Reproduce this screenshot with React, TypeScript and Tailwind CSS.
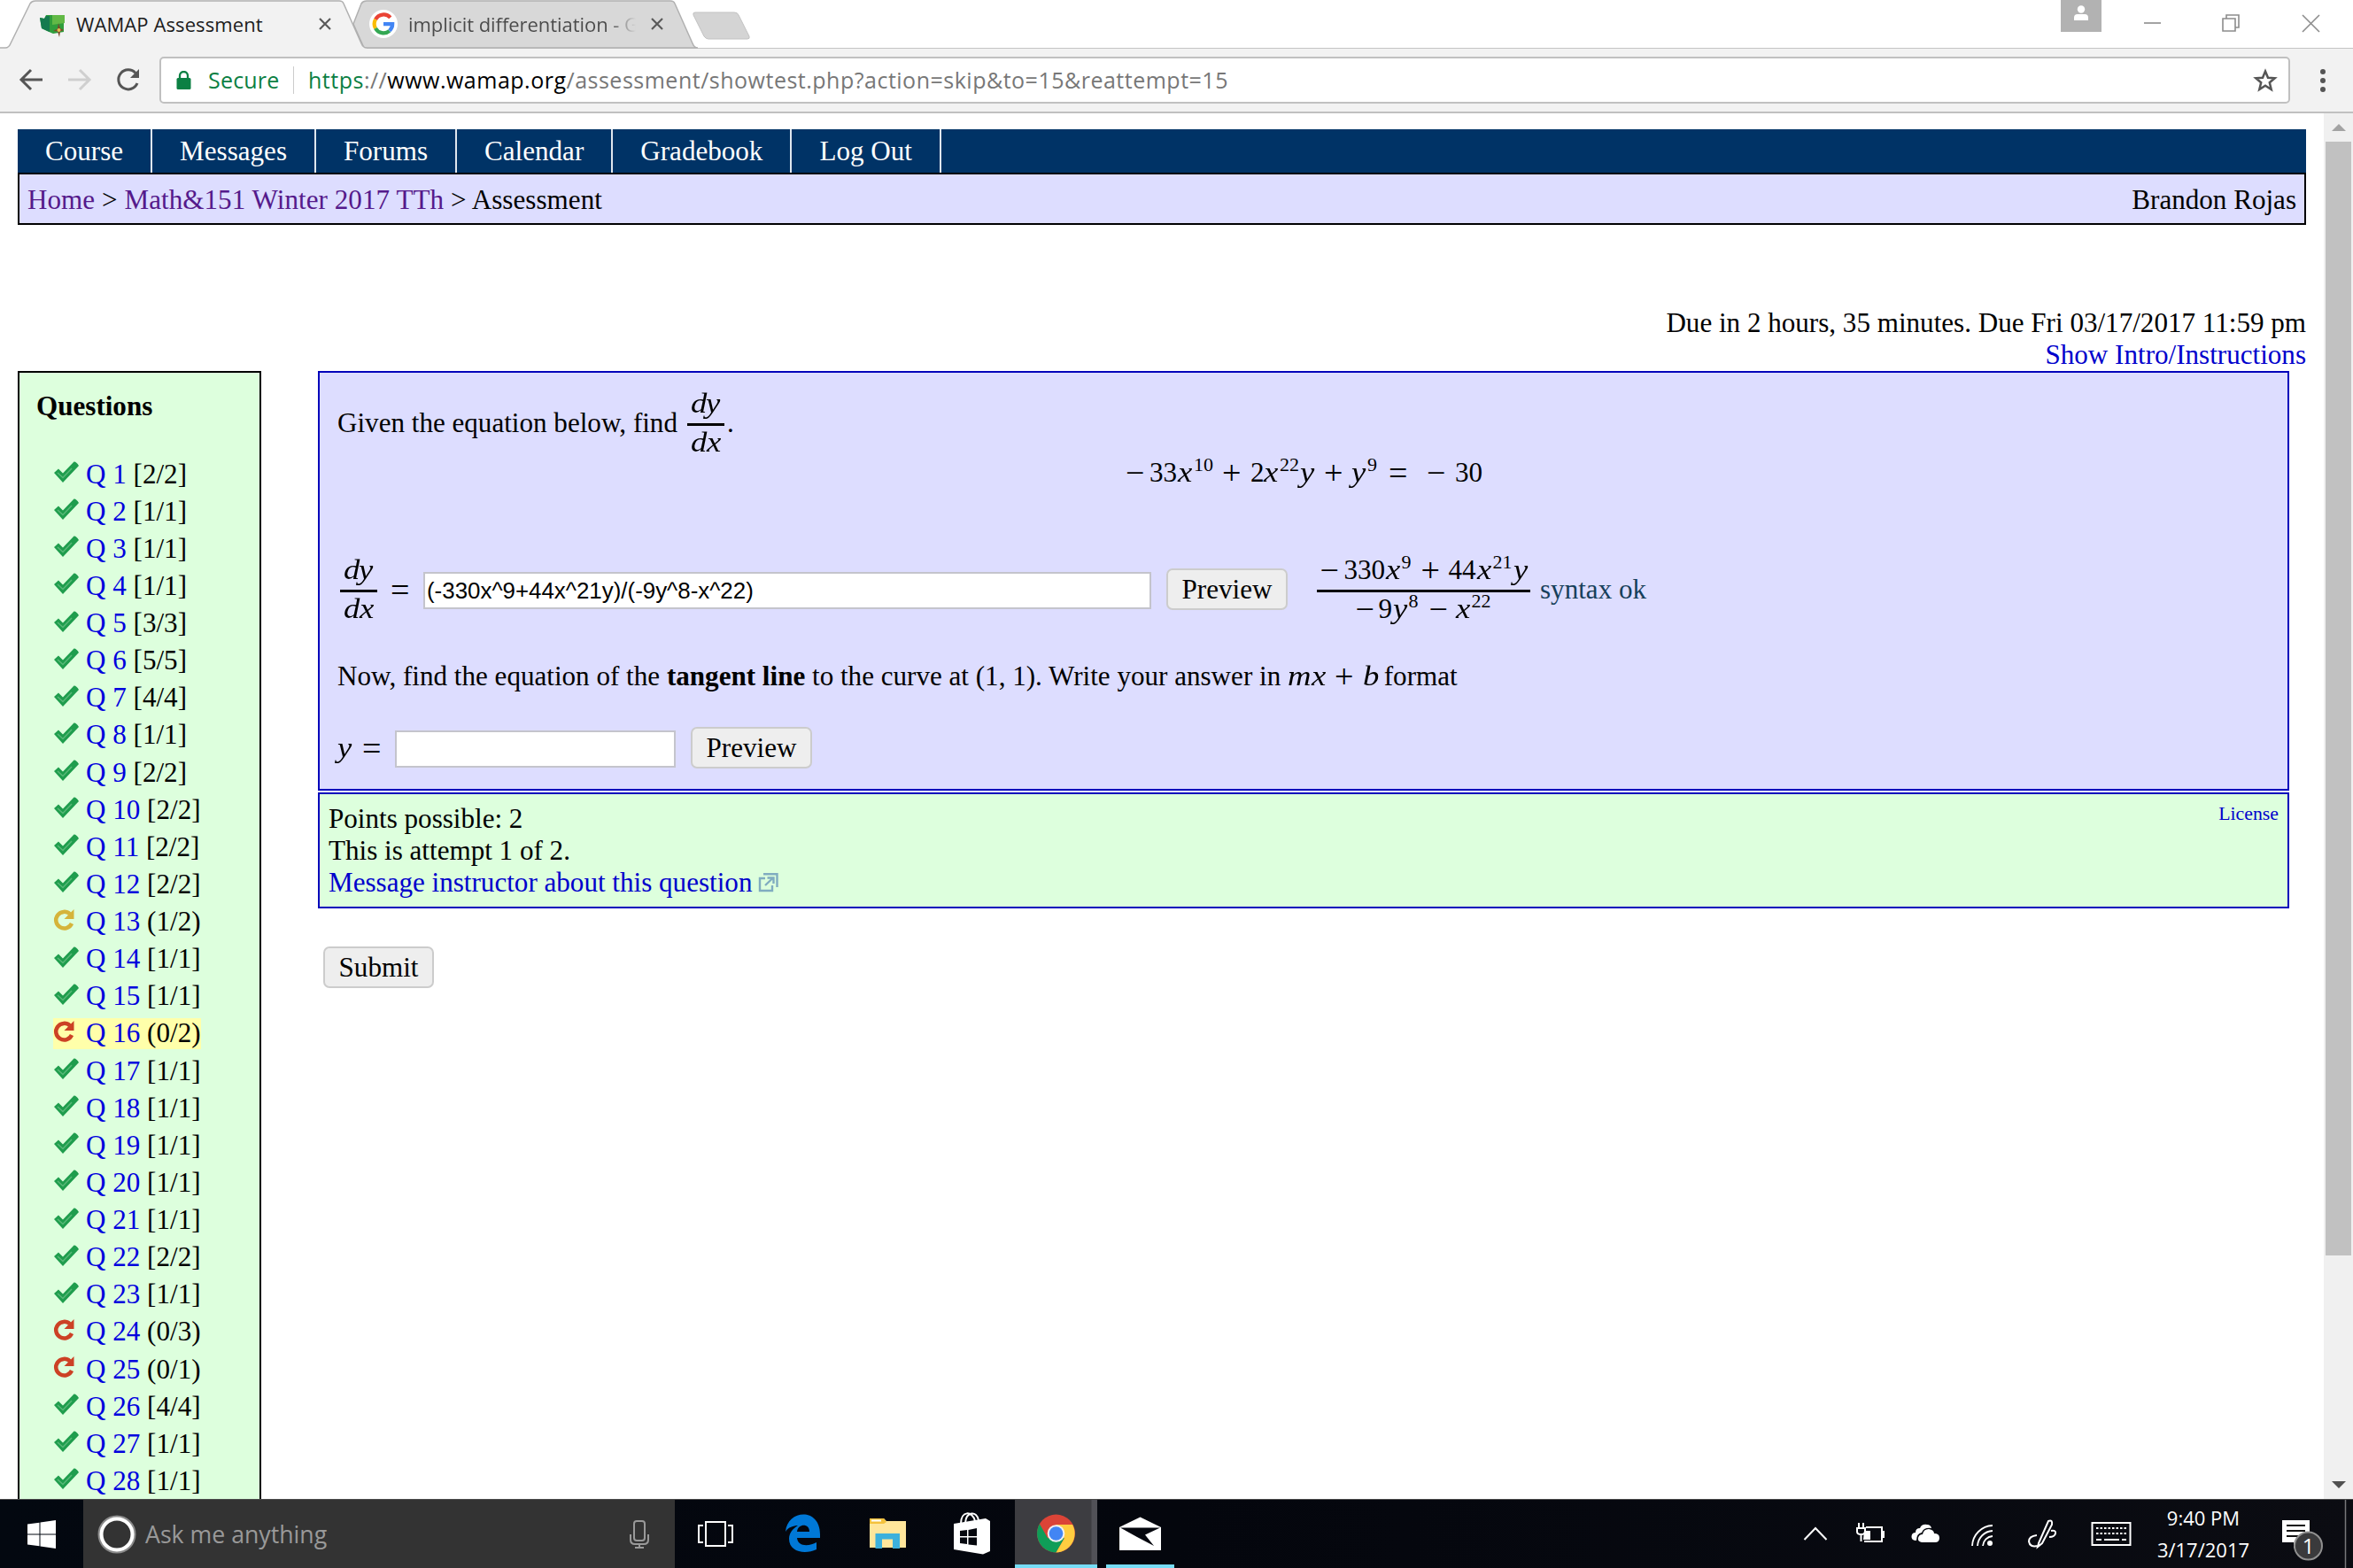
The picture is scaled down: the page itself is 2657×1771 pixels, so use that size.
import type { ReactNode } from "react";

type Status = "full" | "partial" | "wrong";

const questions: { score: string; status: Status }[] = [
  { score: "[2/2]", status: "full" },
  { score: "[1/1]", status: "full" },
  { score: "[1/1]", status: "full" },
  { score: "[1/1]", status: "full" },
  { score: "[3/3]", status: "full" },
  { score: "[5/5]", status: "full" },
  { score: "[4/4]", status: "full" },
  { score: "[1/1]", status: "full" },
  { score: "[2/2]", status: "full" },
  { score: "[2/2]", status: "full" },
  { score: "[2/2]", status: "full" },
  { score: "[2/2]", status: "full" },
  { score: "(1/2)", status: "partial" },
  { score: "[1/1]", status: "full" },
  { score: "[1/1]", status: "full" },
  { score: "(0/2)", status: "wrong" },
  { score: "[1/1]", status: "full" },
  { score: "[1/1]", status: "full" },
  { score: "[1/1]", status: "full" },
  { score: "[1/1]", status: "full" },
  { score: "[1/1]", status: "full" },
  { score: "[2/2]", status: "full" },
  { score: "[1/1]", status: "full" },
  { score: "(0/3)", status: "wrong" },
  { score: "(0/1)", status: "wrong" },
  { score: "[4/4]", status: "full" },
  { score: "[1/1]", status: "full" },
  { score: "[1/1]", status: "full" },
];

const CURRENT = 16;

/* ---------- browser chrome ---------- */

const TabClose = () => (
  <svg width="14" height="14" viewBox="0 0 14 14" className="shrink-0">
    <path d="M1 1l12 12M13 1L1 13" stroke="#5a5a5a" strokeWidth="2.2" />
  </svg>
);

const TabStrip = () => (
  <div className="relative flex h-[54px] shrink-0 bg-white font-['Open_Sans',sans-serif] text-[22px] leading-[54px]">
    <svg width="860" height="55" viewBox="0 0 860 55" className="absolute top-0 left-0">
      <path d="M399 27L408 4Q410 1 414 1H757Q761 1 762 4L782 49Q784 54 788 54H411z" fill="#d8d8d8" stroke="#b0b0b0" strokeWidth="1.5" />
      <path d="M785 14H829Q833 14 834 17L846 41Q847 44 844 44H800Q797 44 795 41L783 17Q782 14 785 14z" fill="#d4d4d4" stroke="#c2c2c2" />
      <path d="M0 55V54H6Q10 54 12 49L34 4Q36 1 40 1H383Q387 1 388 4L408 49Q410 54 414 54V55z" fill="#f2f2f2" />
      <path d="M0 54H6Q10 54 12 49L34 4Q36 1 40 1H383Q387 1 388 4L408 49Q410 54 414 54" fill="none" stroke="#b0b0b0" strokeWidth="1.5" />
    </svg>
    <div className="relative flex w-[400px] items-center pl-[44px]">
      <svg width="31" height="26" viewBox="0 0 31 26" className="mt-[4px] shrink-0">
        <path d="M1 4L6 5 8 1 28 1V20L16 22 9 19 3 16z" fill="#2f9e3c" />
        <path d="M1 4L6 5 8 2 12 2 12 20 3 16z" fill="#157a4f" />
        <path d="M15 1H29V10L15 12z" fill="#62b946" />
        <path d="M22 10L24 16 28 18 24 19.500 23 26 21 19.500 16 19 21 16.500z" fill="#7b4a2a" />
        <circle cx="22.500" cy="18" r="2" fill="#e0c050" />
      </svg>
      <span className="ml-[11px] w-[274px] whitespace-nowrap text-[#1c1c1c] tracking-[0.1px]">WAMAP Assessment</span>
      <TabClose />
    </div>
    <div className="relative flex items-center pl-[17px]">
      <svg width="32" height="32" viewBox="0 0 32 32" className="shrink-0">
        <circle cx="16" cy="16" r="16" fill="#fff" />
        <g fill="none" strokeWidth="4.200">
          <path d="M23.800 8.900A10.300 10.300 0 0 0 7 11" stroke="#ea4335" />
          <path d="M7 11A10.300 10.300 0 0 0 7 21" stroke="#fbbc05" />
          <path d="M7 21A10.300 10.300 0 0 0 22.800 23.800" stroke="#34a853" />
          <path d="M22.800 23.800A10.300 10.300 0 0 0 26.200 16.100H16" stroke="#4285f4" />
        </g>
      </svg>
      <span className="ml-[12px] w-[257px] bg-gradient-to-r from-[#4a4a4a] from-88% to-[#d8d8d8] bg-clip-text whitespace-nowrap text-transparent tracking-[-0.050px]">
        implicit differentiation - G
      </span>
      <span className="ml-[17px] flex"><TabClose /></span>
    </div>
    <div className="relative ml-auto flex">
      <div className="flex h-[36px] w-[46px] justify-center bg-[#b2b2b2]">
        <svg width="20" height="24" viewBox="0 0 20 24">
          <circle cx="10" cy="10.500" r="4.200" fill="#fff" />
          <path d="M2 23V20Q2 16 6 16H14Q18 16 18 20V23z" fill="#fff" />
        </svg>
      </div>
      <svg width="284" height="54" viewBox="0 0 284 54" fill="none" stroke="#8c8c8c" strokeWidth="1.600">
        <path d="M48 26H67" />
        <path d="M137 21H151V35H137zM141 21V17H155V31H151" />
        <path d="M227 17L246 36M246 17L227 36" />
      </svg>
    </div>
  </div>
);

const Toolbar = () => (
  <div className="flex h-[74px] shrink-0 items-center border-t border-b-2 border-t-[#c4c4c4] border-b-[#c0c0c0] bg-[#f2f2f2] font-['Open_Sans',sans-serif] text-[25px]">
    <svg width="180" height="52" viewBox="0 0 180 52" fill="none" strokeWidth="3" className="shrink-0">
      <path d="M48 25H25M35 14L24 25L35 36" stroke="#555" />
      <path d="M77 25H100M90 14L101 25L90 36" stroke="#cfcfcf" />
      <path d="M153 17.500A11 11 0 1 0 155 29" stroke="#555" />
      <path d="M157 13V23H147z" fill="#555" />
    </svg>
    <div className="flex h-[53px] w-[2406px] items-center rounded-[5px] border-2 border-[#c0c0c0] bg-white pl-[17px]">
      <svg width="17" height="22" viewBox="0 0 17 22">
        <rect x="0.500" y="8" width="16" height="13" rx="1.500" fill="#0b8043" />
        <path d="M4 9V5.500A4.500 4.500 0 0 1 13 5.500V9" fill="none" stroke="#0b8043" strokeWidth="2.300" />
      </svg>
      <span className="ml-[19px] w-[96px] tracking-[0.200px] text-[#0b8043]">Secure</span>
      <span className="h-[31px] w-px bg-[#ccc]" />
      <span className="ml-[16px] whitespace-nowrap text-[#777] tracking-[0.500px]">
        <span className="text-[#0b8043]">https</span>://<span className="text-black">www.wamap.org</span>
        /assessment/showtest.php?action=skip&amp;to=15&amp;reattempt=15
      </span>
      <svg width="28" height="27" viewBox="0 0 28 27" className="mr-[12px] ml-auto">
        <path d="M14 3.500L17 10.700L24.700 11.300L18.800 16.300L20.700 24L14 19.800L7.300 24L9.200 16.300L3.300 11.300L11 10.700z" fill="none" stroke="#555" strokeWidth="2.500" />
      </svg>
    </div>
    <svg width="8" height="30" viewBox="0 0 8 30" className="ml-[33px]">
      <circle cx="4" cy="5" r="3" fill="#555" />
      <circle cx="4" cy="15" r="3" fill="#555" />
      <circle cx="4" cy="25" r="3" fill="#555" />
    </svg>
  </div>
);

const Scrollbar = () => (
  <div className="flex w-[33px] shrink-0 flex-col items-center bg-[#f0f0f0]">
    <svg width="16" height="32" viewBox="0 0 16 32"><path d="M0 20L8 12L16 20z" fill="#a3a3a3" /></svg>
    <div className="h-[1258px] w-[29px] bg-[#c1c1c1]" />
    <svg width="16" height="8" viewBox="0 0 16 8" className="mt-auto mb-[12px]"><path d="M0 0H16L8 8z" fill="#505050" /></svg>
  </div>
);

/* ---------- WAMAP page ---------- */

const NavItem = ({ children }: { children: ReactNode }) => (
  <a className="border-r-2 border-[#dfe6ee] px-[31px] text-white">{children}</a>
);

const StatusIcon = ({ status }: { status: Status }) => {
  if (status === "full") {
    return (
      <svg width="30" height="26" viewBox="0 0 30 26">
        <path d="M1 14L6 9.500L11 14.500L23.500 1.500Q26 1 29 6L11 25Z" fill="#1f9d4d" />
        <path d="M5 14L11 19.500L21 9" fill="none" stroke="#58b877" strokeWidth="1.500" />
      </svg>
    );
  }
  const color = status === "partial" ? "#d5b43a" : "#cc4125";
  return (
    <svg width="30" height="26" viewBox="0 0 30 26">
      <path d="M19 6.500A9.300 9.300 0 1 0 21 17" fill="none" stroke={color} strokeWidth="4.500" />
      <path d="M23.500 1V12H12.500z" fill={color} />
    </svg>
  );
};

const Sidebar = () => (
  <div className="h-[1400px] w-[275px] shrink-0 border-2 border-black bg-[#ddffdd] pt-[20px] pl-[19px]">
    <h3 className="leading-[36px] font-bold">Questions</h3>
    <ul className="mt-[37.500px] ml-[19px]">
      {questions.map((q, i) => (
        <li key={i} className="flex h-[42.140px] items-center">
          <span className={i + 1 === CURRENT ? "flex h-[35px] items-center bg-[#ffffaa]" : "flex h-[35px] items-center"}>
            <span className="-mt-[5px]"><StatusIcon status={q.status} /></span>
            <span className="ml-[7px] whitespace-nowrap">
              <a className="text-[#0000dd]">Q {i + 1}</a> {q.score}
            </span>
          </span>
        </li>
      ))}
    </ul>
  </div>
);

/* Math pieces: every token has its own advance width, sized like MathJax output */
const Num = ({ w, children }: { w: string; children: ReactNode }) => (
  <span className={`inline-block text-left leading-[0] ${w}`}>{children}</span>
);
const Var = ({ w = "w-[18px]", children }: { w?: string; children: ReactNode }) => (
  <span className={`inline-block text-left leading-[0] ${w}`}>
    <i className="inline-block origin-left scale-x-[1.18]">{children}</i>
  </span>
);
const Op = ({ w, children }: { w: string; children: ReactNode }) => (
  <span className={`inline-block text-left align-[-3px] text-[38px] leading-[0] ${w}`}>{children}</span>
);
const Sup = ({ w, children }: { w: string; children: ReactNode }) => (
  <span className={`inline-block text-left align-[12px] text-[22px] leading-[0] ${w}`}>{children}</span>
);

const Frac = ({ w, top, bottom }: { w: string; top: ReactNode; bottom: ReactNode }) => (
  <span className={`flex shrink-0 flex-col text-center whitespace-nowrap ${w}`}>
    <span className="h-[36px] shrink-0 leading-[39px]">{top}</span>
    <span className="mt-[6px] h-[3px] shrink-0 bg-black" />
    <span className="h-[36px] shrink-0 leading-[38px]">{bottom}</span>
  </span>
);

const DyDx = () => (
  <Frac
    w="w-[42px]"
    top={<><Var w="w-[17px]">d</Var><Var w="w-[17px]">y</Var></>}
    bottom={<><Var w="w-[18px]">d</Var><Var w="w-[17px]">x</Var></>}
  />
);

const Btn = ({ className, children }: { className: string; children: ReactNode }) => (
  <button className={`h-[47px] shrink-0 rounded-[7px] border-2 border-[#ccc] bg-[#eee] leading-[36px] ${className}`}>{children}</button>
);

const QuestionPanel = () => (
  <div className="h-[474px] w-[2226px] border-2 border-[#0000bb] bg-[#ddddff] pt-[15px] pl-[20px]">
    <div className="flex h-[78px]">
      <span className="mt-[24px] w-[395px] whitespace-nowrap">Given the equation below, find</span>
      <DyDx />
      <span className="mt-[24px] ml-[3px]">.</span>
    </div>

    <div className="h-[36px] pl-[890px] leading-[39px] whitespace-nowrap">
      <Op w="w-[27px]">−</Op><Num w="w-[32px]">33</Num><Var>x</Var><Sup w="w-[32px]">10</Sup>
      <Op w="w-[32px]">+</Op><Num w="w-[15px]">2</Num><Var>x</Var><Sup w="w-[23px]">22</Sup><Var w="w-[27px]">y</Var>
      <Op w="w-[31px]">+</Op><Var>y</Var><Sup w="w-[24px]">9</Sup>
      <Op w="w-[43px]">=</Op><Op w="w-[32px]">−</Op><Num w="w-[31px]">30</Num>
    </div>

    <div className="mt-[74px] flex h-[80px]">
      <span className="ml-[3px] flex"><DyDx /></span>
      <span className="mt-[24px] ml-[15px] w-[37px]"><Op w="w-[22px]">=</Op></span>
      <input
        readOnly
        value="(-330x^9+44x^21y)/(-9y^8-x^22)"
        className="mt-[22px] h-[42px] w-[822px] border-2 border-[#c4c4cc] bg-white px-[2px] font-['Liberation_Sans',sans-serif] text-[25.900px]"
      />
      <Btn className="mt-[18px] ml-[17px] w-[137px]">Preview</Btn>
      <span className="ml-[33px] flex">
        <Frac
          w="w-[241px]"
          top={
            <>
              <Op w="w-[27px]">−</Op><Num w="w-[47px]">330</Num><Var>x</Var><Sup w="w-[22px]">9</Sup>
              <Op w="w-[31px]">+</Op><Num w="w-[32px]">44</Num><Var>x</Var><Sup w="w-[23px]">21</Sup><Var w="w-[16px]">y</Var>
            </>
          }
          bottom={
            <>
              <Op w="w-[26px]">−</Op><Num w="w-[16px]">9</Num><Var>y</Var><Sup w="w-[23px]">8</Sup>
              <Op w="w-[30px]">−</Op><Var>x</Var><Sup w="w-[23px]">22</Sup>
            </>
          }
        />
      </span>
      <span className="mt-[24px] ml-[11px] whitespace-nowrap text-[#17405a]">syntax ok</span>
    </div>

    <p className="mt-[42px] h-[36px] leading-[36px] whitespace-nowrap">
      Now, find the equation of the <b>tangent line</b> to the curve at (1, 1). Write your answer in{" "}
      <Var w="w-[27px]">m</Var><Var w="w-[26px]">x</Var><Op w="w-[32px]">+</Op><Var w="w-[16px]">b</Var> format
    </p>

    <div className="mt-[39px] flex h-[46px]">
      <span className="mt-[6px] w-[65px] whitespace-nowrap"><Var w="w-[28px]">y</Var><Op w="w-[22px]">=</Op></span>
      <input readOnly className="mt-[4px] h-[42px] w-[317px] border-2 border-[#c4c4cc] bg-white" />
      <Btn className="ml-[17px] w-[137px]">Preview</Btn>
    </div>
  </div>
);

const AttemptPanel = () => (
  <div className="mt-[2px] flex h-[131px] w-[2226px] justify-between border-2 border-[#0000bb] bg-[#ddffdd] pt-[10px] pr-[10px] pl-[10px]">
    <div>
      <p>Points possible: 2</p>
      <p>This is attempt 1 of 2.</p>
      <a className="flex text-[#0000cc]">
        Message instructor about this question
        <svg width="23" height="22" viewBox="0 0 23 22" fill="none" stroke="#80acc0" strokeWidth="2.400" className="mt-[7px] ml-[7px]">
          <path d="M8 6H2V20H16V14" />
          <path d="M6 1.200H21.500V16" />
          <path d="M8 14L17 5.500M10.500 5.500H17.500V12" />
        </svg>
      </a>
    </div>
    <a className="text-[21.800px] leading-[25px] text-[#0000cc]">License</a>
  </div>
);

const Page = () => (
  <div className="flex-1 overflow-hidden pt-[18px] pl-[20px] font-['Liberation_Serif',serif] text-[31.100px] leading-[36px] text-black">
    <div className="w-[2584px]">
      <nav className="flex h-[49px] bg-[#003366] leading-[50px]">
        <NavItem>Course</NavItem>
        <NavItem>Messages</NavItem>
        <NavItem>Forums</NavItem>
        <NavItem>Calendar</NavItem>
        <NavItem>Gradebook</NavItem>
        <NavItem>Log Out</NavItem>
      </nav>
      <div className="flex h-[59px] justify-between border-2 border-black bg-[#ddddff] px-[9px] pt-[11px]">
        <span className="tracking-[0.050px]">
          <a className="text-[#551a8b]">Home</a> &gt; <a className="text-[#551a8b]">Math&amp;151 Winter 2017 TTh</a> &gt; Assessment
        </span>
        <span>Brandon Rojas</span>
      </div>
      <div className="mt-[93px] h-[72px] text-right">
        <p>Due in 2 hours, 35 minutes. Due Fri 03/17/2017 11:59 pm</p>
        <a className="text-[#0000cc]">Show Intro/Instructions</a>
      </div>
      <div className="flex">
        <Sidebar />
        <div className="ml-[64px]">
          <QuestionPanel />
          <AttemptPanel />
          <Btn className="mt-[43px] ml-[6px] w-[125px]">Submit</Btn>
        </div>
      </div>
    </div>
  </div>
);

/* ---------- Windows taskbar ---------- */

const Taskbar = () => (
  <div className="flex h-[78px] shrink-0 border-t border-[#4a4a4a] bg-gradient-to-r from-[#030810] via-[#04060d] to-[#0b0c12] font-['Open_Sans',sans-serif]">
    <div className="flex w-[94px] shrink-0 items-center pl-[31px]">
      <svg width="32" height="32" viewBox="0 0 32 32" fill="#fff">
        <path d="M0 4.500L13.500 2.700V15.500H0zM14.500 2.500L32 0V15.500H14.500zM0 16.500H13.500V29.300L0 27.500zM14.500 16.500H32V32L14.500 29.500z" />
      </svg>
    </div>
    <div className="flex w-[668px] shrink-0 items-center bg-[#333] pl-[16px]">
      <svg width="44" height="44" viewBox="0 0 44 44" fill="none">
        <circle cx="22" cy="22" r="20" stroke="#8b8b8b" strokeWidth="3" />
        <circle cx="22" cy="22" r="17.500" stroke="#fff" strokeWidth="4" />
      </svg>
      <span className="ml-[10px] text-[26.700px] leading-[36px] whitespace-nowrap text-[#999]">Ask me anything</span>
      <svg width="22" height="32" viewBox="0 0 22 32" fill="none" stroke="#999" strokeWidth="2" className="mr-[29px] ml-auto">
        <rect x="5" y="1" width="12" height="22" rx="3" />
        <path d="M1 16V22Q1 27 6 27H16Q21 27 21 22V16M11 27V31M6 31H16" />
      </svg>
    </div>
    <svg width="384" height="77" viewBox="762 1694 384 77" className="shrink-0">
      <g fill="none" stroke="#fff" strokeWidth="2">
        <path d="M797 1719H819V1746H797zM794 1723H789V1742H794M822 1723H827V1742H822" />
      </g>
      <path d="M887 1730C889 1705 926 1702 926 1733V1737H900C901 1748 915 1746 922 1742V1750C909 1756 891 1753 891 1738C891 1731 896 1726 901 1723C896 1723 890 1725 887 1730zM900 1730H914C914 1720 901 1721 900 1730z" fill="#0078d7" />
      <path d="M982 1716Q982 1715 984 1715H998L1001 1718H1023V1748H982z" fill="#ffe69b" />
      <path d="M982 1715H998L1001 1719L998 1721H982z" fill="#f3c13c" />
      <path d="M984 1717.500H995" stroke="#fff" strokeWidth="2" />
      <path d="M988.500 1749V1732H1016V1749H1008V1738.500H996V1749z" fill="#3cb0dc" />
      <path d="M1077 1721L1113 1715L1118 1718V1752L1110 1755.500L1077 1750z" fill="#fff" />
      <path d="M1085 1721C1085 1706 1098 1706 1101 1718M1090 1720C1091 1707 1103 1706 1105 1717" fill="none" stroke="#fff" strokeWidth="2" />
      <path d="M1084 1729L1092 1728V1735H1084zM1093.500 1728L1103 1726V1735H1093.500zM1084 1736.500H1092V1744L1084 1743zM1093.500 1736.500H1103V1745.500L1093.500 1744.500z" fill="#05070e" />
    </svg>
    <div className="flex w-[93px] shrink-0 flex-col justify-between border-b-4 border-[#76dcf5] bg-gradient-to-r from-[#3d3d41] from-92% to-[#515157] to-94%">
      <svg width="93" height="73" viewBox="1146 1694 93 73">
        <circle cx="1192.500" cy="1732" r="21.500" fill="#db4437" />
        <path d="M1173.900 1721.300A21.500 21.500 0 0 0 1192.500 1753.500L1201.800 1737.400L1192.500 1732L1183.200 1737.400z" fill="#0f9d58" />
        <path d="M1192.500 1753.500A21.500 21.500 0 0 0 1211.100 1721.900H1192.500L1201.800 1737.400z" fill="#ffcd40" />
        <circle cx="1192.500" cy="1732" r="9.800" fill="#f1f1f1" />
        <circle cx="1192.500" cy="1732" r="7.800" fill="#4285f4" />
      </svg>
    </div>
    <div className="ml-[10px] w-[77px] shrink-0 border-b-4 border-[#76dcf5]">
      <svg width="77" height="73" viewBox="1249 1694 77 73">
        <path d="M1264 1725L1287.500 1713.500L1311 1725V1751H1264z" fill="#fff" />
        <path d="M1265 1725.500H1310L1293 1733.500L1303 1746L1284 1736z" fill="#05070e" />
      </svg>
    </div>
    <svg width="404" height="77" viewBox="2026 1694 404 77" fill="none" stroke="#fff" strokeWidth="2" className="ml-auto shrink-0">
      <path d="M2037.500 1739L2050 1726L2062.500 1739" />
      <path d="M2107 1725H2125V1741H2105M2127 1729V1737M2099 1720V1725M2104 1720V1725M2097 1726H2106V1730Q2106 1733 2101.500 1733Q2097 1733 2097 1730zM2101.500 1733V1741" />
      <path d="M2105 1729H2112V1739H2104z" fill="#fff" stroke="none" />
      <path d="M2164 1740Q2158 1740 2158.500 1735Q2159 1731 2163 1731Q2163 1726 2168 1726Q2170 1721 2176 1722Q2180 1722 2181 1726Q2172 1725 2170 1731Q2164 1732 2164 1740z" fill="#fff" stroke="none" />
      <path d="M2170 1742Q2165 1741 2166 1737Q2167 1733 2171 1733Q2172 1727 2178 1727Q2184 1728 2184 1732Q2190 1732 2190 1737Q2190 1742 2185 1742z" fill="#fff" stroke="none" />
      <path d="M2227 1746A24 24 0 0 1 2250 1723M2233 1746A18 18 0 0 1 2250 1729M2239 1746A12 12 0 0 1 2250 1735" strokeWidth="1.800" />
      <circle cx="2247" cy="1743" r="3" fill="#fff" stroke="none" />
      <path d="M2302 1743L2313 1718Q2318 1716 2317 1722L2306 1743L2301 1747zM2300 1734Q2291 1735 2291 1741Q2292 1748 2301 1746M2316 1729Q2322 1728 2321 1732Q2320 1736 2314 1736" />
      <rect x="2362.500" y="1720" width="43" height="25" />
      <path d="M2367 1726H2401M2367 1732H2401" strokeDasharray="2.500 2" />
      <path d="M2367 1739H2373M2376 1739H2393M2396 1739H2401" />
    </svg>
    <div className="w-[124px] shrink-0 pt-[2px] pr-[8px] text-center text-[22px] leading-[36px] whitespace-nowrap text-white">
      <p>9:40 PM</p>
      <p>3/17/2017</p>
    </div>
    <div className="relative w-[103px] shrink-0">
      <svg width="103" height="77" viewBox="2554 1694 103 77">
        <path d="M2577 1717H2608V1742H2594L2590 1749V1742H2577z" fill="#fff" />
        <path d="M2582 1723H2603M2582 1729H2603M2582 1735H2597" stroke="#111" strokeWidth="2" />
        <circle cx="2606.500" cy="1746" r="15.500" fill="#3a3a3c" stroke="#909090" strokeWidth="2" />
        <path d="M2648.500 1694V1771" stroke="#77777a" strokeWidth="1.500" />
      </svg>
      <span className="absolute top-[36px] left-[37px] w-[31px] text-center text-[24px] leading-[32px] text-white">1</span>
    </div>
  </div>
);

export default function App() {
  return (
    <div className="flex h-[1771px] w-[2657px] flex-col overflow-hidden bg-white">
      <TabStrip />
      <Toolbar />
      <div className="flex min-h-0 flex-1">
        <Page />
        <Scrollbar />
      </div>
      <Taskbar />
    </div>
  );
}
